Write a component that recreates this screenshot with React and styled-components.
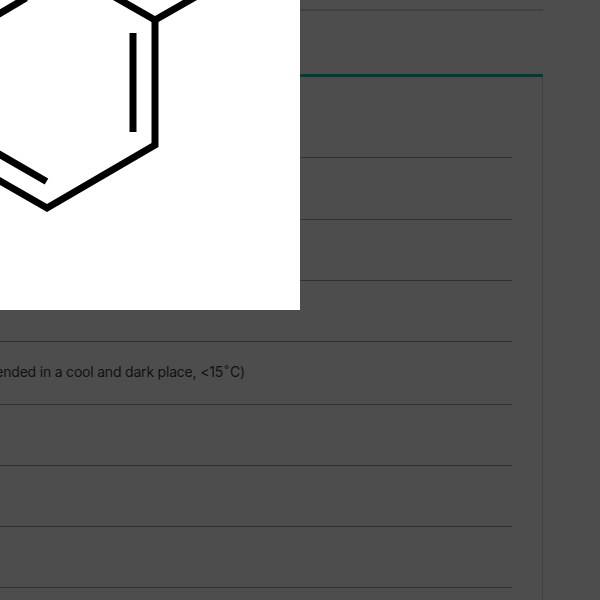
import React from "react";
import styled, { createGlobalStyle } from "styled-components";

const Global = createGlobalStyle`
  html, body { margin: 0; padding: 0; background: #4d4d4d; }
  body { font-family: Inter, "Liberation Sans", sans-serif; }
`;

const Page = styled.div`
  position: relative;
  width: 600px;
  height: 600px;
  overflow: hidden;
  background: #4d4d4d;
`;

const Panel = styled.div`
  width: 943px;
  margin-left: -400px;
  padding-top: 9px;
`;

const Heading = styled.div`
  height: 63px;
  border-top: 2px solid #414141;
  border-bottom: 3px solid #003c33;
`;

const Body = styled.div`
  height: 560px;
  padding-right: 30px;
  border-right: 1px solid #414141;
`;

const Row = styled.div`
  display: flex;
  align-items: center;
  box-sizing: border-box;
  height: ${p => p.$h}px;
  padding-bottom: 4px;
  border-bottom: 1px solid #323232;
  color: #111;
  font-size: 14px;
  letter-spacing: -0.2px;
`;

const Value = styled.span`
  margin-left: 207px;
  white-space: nowrap;
`;

const Degree = styled.span`
  margin: 0 1.5px;
`;

const Modal = styled.div`
  position: absolute;
  top: 0;
  left: 0;
  width: 300px;
  height: 310px;
  background: #fff;
`;

const Molecule = styled.svg`
  display: block;
  width: 300px;
  height: 310px;
`;

const rows = [
  { h: 81 },
  { h: 62 },
  { h: 61 },
  { h: 61 },
  {
    h: 63,
    text: (
      <>
        Room Temperature (Recommended in a cool and dark place, &lt;15<Degree>˚</Degree>C)
      </>
    ),
  },
  { h: 61 },
  { h: 61 },
  { h: 61 },
];

export default function App() {
  return (
    <Page>
      <Global />
      <Panel>
        <Heading />
        <Body>
          {rows.map((row, i) => (
            <Row key={i} $h={row.h}>
              {row.text && <Value>{row.text}</Value>}
            </Row>
          ))}
        </Body>
      </Panel>
      <Modal>
        <Molecule viewBox="0 0 300 310" fill="none" stroke="#000" strokeWidth="7">
          <path d="M113 -4 L155 20 L197 -4" strokeLinejoin="miter" />
          <path d="M155 20 L155 145 L47 208 L-12 174" strokeLinejoin="miter" />
          <path d="M133 33 L133 132" />
          <path d="M46.500 181.500 L-8 150" />
          <path d="M-6 17 L26 -2" />
        </Molecule>
      </Modal>
    </Page>
  );
}
